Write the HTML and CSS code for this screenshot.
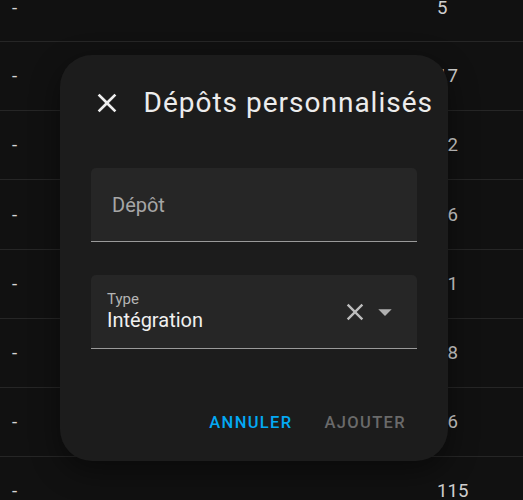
FILE: index.html
```html
<!DOCTYPE html>
<html lang="fr">
<head>
<meta charset="utf-8">
<title>Dépôts personnalisés</title>
<link rel="stylesheet" href="styles.css">
</head>
<body>
<div class="table">
  <div class="row row-top"><span class="cell-dash">-</span><span class="cell-num">5</span></div>
  <div class="row"><span class="cell-dash">-</span><span class="cell-num">17</span></div>
  <div class="row"><span class="cell-dash">-</span><span class="cell-num">12</span></div>
  <div class="row"><span class="cell-dash">-</span><span class="cell-num">16</span></div>
  <div class="row"><span class="cell-dash">-</span><span class="cell-num">11</span></div>
  <div class="row"><span class="cell-dash">-</span><span class="cell-num">18</span></div>
  <div class="row"><span class="cell-dash">-</span><span class="cell-num">16</span></div>
  <div class="row row-bottom"><span class="cell-dash">-</span><span class="cell-num">115</span></div>
</div>

<div class="dialog" role="dialog">
  <div class="dialog-header">
    <button class="icon-btn close-btn" aria-label="Fermer">
      <svg viewBox="0 0 24 24" width="32" height="32"><path fill="currentColor" d="M19,6.41L17.59,5L12,10.59L6.41,5L5,6.41L10.59,12L5,17.59L6.41,19L12,13.41L17.59,19L19,17.59L13.41,12L19,6.41Z"/></svg>
    </button>
    <h2 class="dialog-title">Dépôts personnalisés</h2>
  </div>

  <div class="dialog-content">
    <div class="field">
      <span class="field-placeholder">Dépôt</span>
    </div>
    <div class="field field-select">
      <div class="select-text">
        <span class="select-label">Type</span>
        <span class="select-value">Intégration</span>
      </div>
      <div class="select-icons">
        <svg class="clear-icon" viewBox="0 0 24 24" width="28" height="28"><path fill="currentColor" d="M19,6.41L17.59,5L12,10.59L6.41,5L5,6.41L10.59,12L5,17.59L6.41,19L12,13.41L17.59,19L19,17.59L13.41,12L19,6.41Z"/></svg>
        <svg class="drop-icon" viewBox="0 0 24 24" width="32" height="32"><path fill="currentColor" d="M7,10L12,15L17,10H7Z"/></svg>
      </div>
    </div>
  </div>

  <div class="dialog-actions">
    <button class="text-btn primary">Annuler</button>
    <button class="text-btn disabled">Ajouter</button>
  </div>
</div>
</body>
</html>
```

FILE: styles.css
```css
html, body {
  margin: 0;
  padding: 0;
  height: 100%;
  overflow: hidden;
}

body {
  background: #111111;
  font-family: Roboto, "Liberation Sans", sans-serif;
  color: #e1e1e1;
  position: relative;
}

.table {
  height: 100%;
  overflow: hidden;
}

.row {
  height: 68.17px;
  box-sizing: content-box;
  border-bottom: 1px solid #262626;
  display: grid;
  grid-template-columns: 425px 1fr;
  align-items: center;
  padding-left: 12px;
  font-size: 18.6px;
  line-height: 14px;
  color: #d6d6d6;
}

.row-top {
  height: 42.17px;
  align-items: start;
  box-sizing: border-box;
  padding-top: 1.2px;
}

.row-bottom {
  height: 41.8px;
  align-items: start;
  box-sizing: border-box;
  padding-top: 26.8px;
  border-bottom: 0;
}

.cell-num {
  color: #cfcfcf;
}

.dialog {
  position: absolute;
  left: 60px;
  top: 55px;
  width: 388px;
  height: 406px;
  box-sizing: border-box;
  background: #1c1c1c;
  border-radius: 32px;
  box-shadow: 0 10px 30px rgba(0, 0, 0, 0.45);
  display: flex;
  flex-direction: column;
  padding: 24px 31px 15px 31px;
}

.dialog-header {
  display: flex;
  align-items: center;
  height: 48px;
  gap: 13px;
  margin-left: -8.5px;
}

.icon-btn {
  flex-shrink: 0;
  width: 48px;
  height: 48px;
  border: 0;
  padding: 0;
  background: transparent;
  color: #eeeeee;
  display: flex;
  align-items: center;
  justify-content: center;
}

.dialog-title {
  flex-shrink: 0;
  margin: 0;
  font-size: 28px;
  font-weight: 400;
  letter-spacing: 1px;
  line-height: 48px;
  color: #ececec;
  white-space: nowrap;
}

.dialog-content {
  display: flex;
  flex-direction: column;
  gap: 33px;
  margin-top: 41px;
}

.field {
  height: 74px;
  box-sizing: border-box;
  background: #262626;
  border-radius: 5px 5px 0 0;
  border-bottom: 1px solid #9a9a9a;
  display: flex;
  align-items: center;
  padding: 0 21px;
}

.field-placeholder {
  font-size: 20px;
  color: #a6a6a6;
}

.field-select {
  height: 74px;
  padding: 0 16px;
  align-items: stretch;
}

.select-text {
  flex: 1;
  display: flex;
  flex-direction: column;
  padding-top: 15px;
}

.select-label {
  font-size: 15px;
  line-height: 18px;
  color: #b4b4b4;
}

.select-value {
  font-size: 20px;
  line-height: 24px;
  color: #f0f0f0;
}

.select-icons {
  display: flex;
  align-items: center;
}

.clear-icon {
  color: #bdbdbd;
}

.drop-icon {
  color: #b0b0b0;
}

.dialog-actions {
  margin-top: auto;
  display: flex;
  justify-content: flex-end;
  gap: 10px;
}

.text-btn {
  height: 48px;
  padding: 0 11px;
  border: 0;
  background: transparent;
  font-family: Roboto, "Liberation Sans", sans-serif;
  font-size: 16.5px;
  font-weight: 500;
  letter-spacing: 1.35px;
  text-transform: uppercase;
}

.text-btn.primary {
  color: #03a9f4;
}

.text-btn.disabled {
  color: #6a6a6a;
}
```
